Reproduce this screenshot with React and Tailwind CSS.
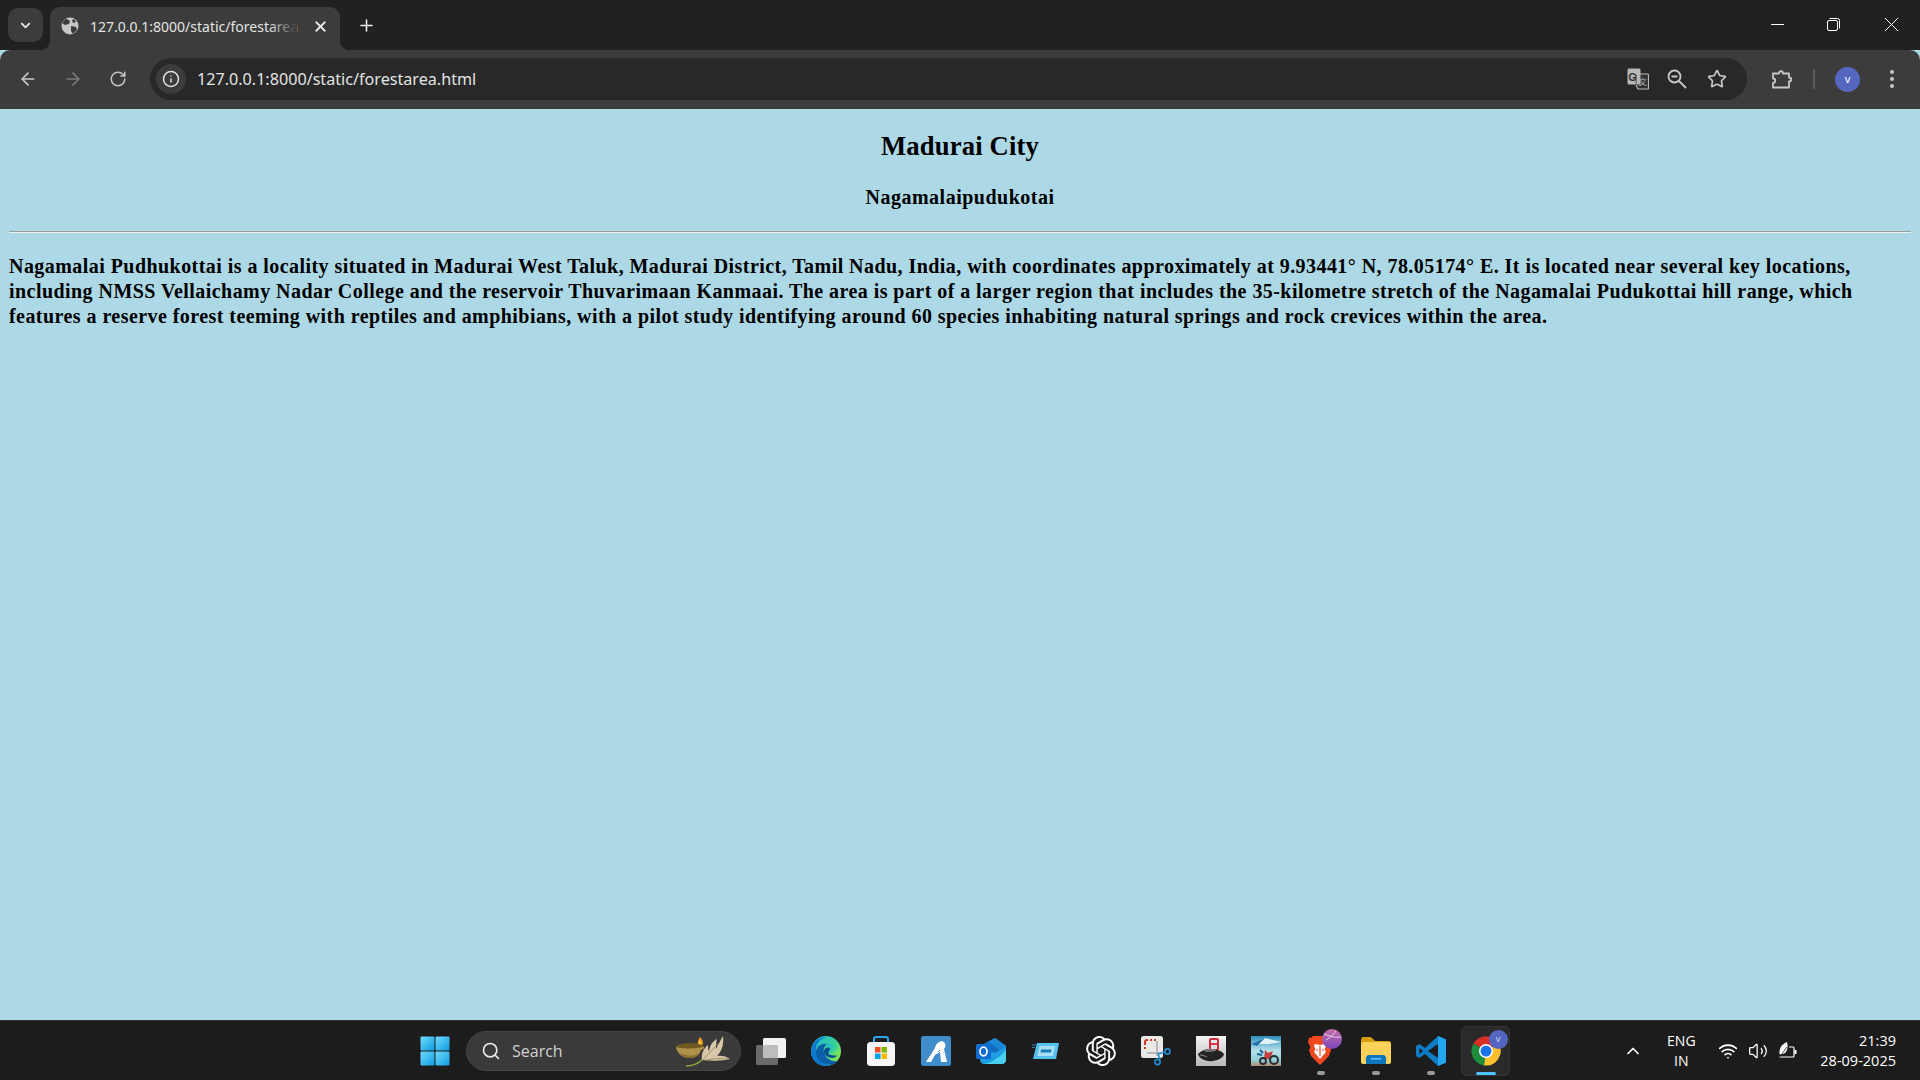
import { ArrowLeft, ArrowRight, RotateCw, Info, Star, ChevronDown, ChevronUp, X, Plus, Search, Wifi, Volume2 } from 'lucide-react';

const WinLogo = () => (
  <svg width="30" height="30" viewBox="0 0 30 30">
    <defs>
      <linearGradient id="wl" x1="0" y1="0" x2="1" y2="1">
        <stop offset="0" stopColor="#6fdcff" />
        <stop offset="1" stopColor="#0f9be0" />
      </linearGradient>
    </defs>
    <rect x="0.5" y="0.5" width="14" height="14" rx="1" fill="url(#wl)" />
    <rect x="15.5" y="0.5" width="14" height="14" rx="1" fill="url(#wl)" />
    <rect x="0.5" y="15.5" width="14" height="14" rx="1" fill="url(#wl)" />
    <rect x="15.5" y="15.5" width="14" height="14" rx="1" fill="url(#wl)" />
  </svg>
);

const Lamp = () => (
  <svg width="60" height="32" viewBox="0 0 60 32">
    <path d="M24 2c3 3 4 6 2 9h-4c-1-3 0-6 2-9z" fill="#e89a18" />
    <path d="M24 5c1 2 1 4 .5 6h-1.500c-.5-2 0-4 1-6z" fill="#f8d860" />
    <ellipse cx="14" cy="12" rx="14" ry="4" fill="#6e5a22" />
    <path d="M0 12c4 2 22 2 28-.5 0 1 0 2-.5 2.500-2 0-2 1-3 2-1 4-5 7-10.500 7C6 23 1 18 0 12z" fill="#b0924a" />
    <path d="M4 17c4 4 14 5 19 1-2 4-5 5-9 5-4 0-8-2-10-6z" fill="#8a6e2e" />
    <path d="M10 31c7 0 13-3 17-7" stroke="#8aa23a" strokeWidth="1.500" fill="none" />
    <path d="M26 25c-1-6 1-11 6-15 0 3 0 5 1 6 1-6 4-10 8-12-1 4-1 7-1 10 2-4 4-8 7-13 1 8-1 15-6 20 4-1 9 0 13 3-8 2-17 2-28 1z" fill="#d8c6a8" />
    <path d="M27 25c5-6 11-12 17-18M30 25c6-1 14-2 22-1" stroke="#937f60" strokeWidth="0.800" fill="none" />
  </svg>
);

const TaskView = () => (
  <svg width="30" height="28" viewBox="0 0 30 28">
    <rect x="7" y="1" width="23" height="20" rx="1.500" fill="#f2f2f2" />
    <rect x="0" y="8" width="22" height="20" rx="1.500" fill="#6a6a6a" />
    <rect x="7" y="8" width="15" height="13" fill="#bdbdbd" />
  </svg>
);

const Edge = () => (
  <svg width="30" height="30" viewBox="0 0 30 30">
    <defs>
      <linearGradient id="eg" x1="0.100" y1="0" x2="0.900" y2="0.700">
        <stop offset="0" stopColor="#1fb4d8" />
        <stop offset="0.600" stopColor="#37cf9a" />
        <stop offset="1" stopColor="#7ce35a" />
      </linearGradient>
    </defs>
    <circle cx="15" cy="15" r="15" fill="url(#eg)" />
    <path d="M0 15C1 6 8 1 15 1 8 3 4 9 5 16c1 8 8 14 17 12-2 1.500-5 2-7 2C7 30 0 24 0 15z" fill="#0e78cf" />
    <path d="M5 15c1-5 6-8 11-7-3 2-4 5-3 9 2 6 8 9 14 8-3 3-6 4-10 3.500C10 28 4 22 5 15z" fill="#0b5fa8" />
    <path d="M16 8c6 0 11 2 13 6 1 2 0 5-3 5-2 0-6 0-8-1-1-.500-1-2-.5-3 1-1.500 2-3 0-5-1-1-2-1.500-1.500-2z" fill="url(#eg)" />
    <path d="M13 15c.5-3 3-4 5-3.500 2 1 .5 3-.5 4.500-.5 1 0 2.500 2 3 2 .5 5 .5 7 .5-2 2-5 3-8 2-3-1-6-3-5.500-6.500z" fill="#0a4f90" />
  </svg>
);

const Store = () => (
  <svg width="30" height="30" viewBox="0 0 30 30">
    <path d="M8 7V3c0-1 .5-2 2-2h10c1.500 0 2 1 2 2v4" stroke="#2aa5e8" strokeWidth="2" fill="none" />
    <rect x="1" y="6" width="28" height="24" rx="3.500" fill="#f6f6f6" />
    <rect x="9" y="11" width="5.500" height="5.500" fill="#f25022" />
    <rect x="15.500" y="11" width="5.500" height="5.500" fill="#7fba00" />
    <rect x="9" y="17.500" width="5.500" height="5.500" fill="#00a4ef" />
    <rect x="15.500" y="17.500" width="5.500" height="5.500" fill="#ffb900" />
  </svg>
);

const AzureA = () => (
  <svg width="30" height="30" viewBox="0 0 30 30">
    <rect width="30" height="30" rx="2.500" fill="#3f8ecb" />
    <path d="M5 26 14 12c1-5 6-8 9-6 2 2 2 5 0 7l3 13h-6l-1-10-5 3-4 7z" fill="#fff" />
    <path d="M19 14l-2 2" stroke="#3f8ecb" strokeWidth="1" />
  </svg>
);

const Outlook = () => (
  <svg width="30" height="26" viewBox="0 0 30 26">
    <path d="M4 8 19 0l11 8v14c0 2-2 4-4 4H8c-2 0-4-2-4-4z" fill="#1f9de2" />
    <path d="M4 8 19 0l11 8-11 7z" fill="#1369bd" />
    <path d="M19 0l11 8-6 4-12-8z" fill="#1a86d6" />
    <path d="M7 26c9-1 17-7 23-14v10c0 2-2 4-4 4z" fill="#47d0f0" />
    <rect x="0" y="6" width="15" height="15" rx="1.500" fill="#0f6cd0" />
    <ellipse cx="7.500" cy="13.500" rx="3.500" ry="4.300" fill="none" stroke="#fff" strokeWidth="1.800" />
  </svg>
);

const SkewBox = () => (
  <svg width="27" height="18" viewBox="0 0 27 18">
    <path d="M5 1h22l-3 16H1z" fill="#55c3f0" />
    <path d="M7.500 4h15.500l-2 10H5.500z" fill="#a9e0f6" />
    <path d="M9 7.500h10.500l-.5 3H8.500z" fill="#1a7fb8" />
    <path d="M0 3h4M0 5.500h3" stroke="#2d84ad" strokeWidth="1" />
  </svg>
);

const Gpt = () => (
  <svg width="30" height="30" viewBox="0 0 320 320" fill="#fff">
    <path d="M297.060 130.970c7.260-21.790 4.760-45.660-6.850-65.480-17.460-30.400-52.560-46.040-86.840-38.680C188.120 9.630 166.110-.13 143.090 0c-35.100-.08-66.250 22.520-77.030 55.920-22.550 4.620-42.020 18.730-53.420 38.730-17.610 30.360-13.590 68.620 9.970 94.610-7.280 21.790-4.770 45.660 6.840 65.480 17.460 30.400 52.560 46.040 86.840 38.680 15.240 17.180 37.260 26.940 60.280 26.800 35.110.09 66.270-22.530 77.040-55.960 22.550-4.620 42.020-18.730 53.420-38.730 17.590-30.360 13.560-68.590-10-94.580zM176.580 299.350c-14.050.02-27.670-4.900-38.470-13.900.49-.26 1.340-.73 1.890-1.070l63.820-36.860c3.270-1.850 5.270-5.330 5.250-9.080v-89.970l26.970 15.570c.29.140.48.42.52.74v74.510c-.04 33.130-26.870 59.990-60 60.060zM47.550 244.240c-7.040-12.160-9.580-26.410-7.170-40.240.47.28 1.300.79 1.890 1.130l63.820 36.860c3.230 1.890 7.240 1.890 10.480 0l77.920-44.990v31.150c.02.32-.13.63-.38.830l-64.520 37.250c-28.730 16.550-65.420 6.710-82.040-21.990zM30.760 104.930c7-12.180 18.060-21.490 31.230-26.320 0 .55-.03 1.530-.03 2.200v73.730c-.02 3.740 1.980 7.210 5.230 9.060l77.920 44.980-26.970 15.570c-.27.18-.61.21-.91.08L52.700 186.940c-28.670-16.610-38.500-53.290-21.940-82zm221.620 51.570-77.920-44.990 26.970-15.560c.27-.18.61-.21.91-.08l64.530 37.250c28.720 16.600 38.560 53.330 21.980 82.050-7.010 12.170-18.060 21.480-31.220 26.320v-75.920c.03-3.740-1.960-7.200-5.200-9.070zM279.220 116.100c-.47-.29-1.300-.79-1.890-1.130l-63.820-36.860c-3.230-1.890-7.240-1.890-10.480 0l-77.920 44.990V91.950c-.02-.32.13-.63.38-.83l64.520-37.220c28.730-16.570 65.470-6.700 82.040 22.040 7 12.140 9.540 26.350 7.170 40.160zM110.460 171.600l-26.980-15.570c-.29-.14-.48-.42-.52-.74V80.780c.02-33.170 26.930-60.050 60.100-60.030 14.030 0 27.610 4.930 38.390 13.900-.49.260-1.330.73-1.890 1.070l-63.820 36.860c-3.270 1.850-5.270 5.320-5.250 9.070l-.03 89.950zm14.650-31.580 34.710-20.050 34.710 20.040v40.080l-34.710 20.040-34.710-20.040z" />
  </svg>
);

const Snip = () => (
  <svg width="30" height="30" viewBox="0 0 30 30">
    <rect x="0" y="0" width="22" height="22" rx="2.500" fill="#ebe8e8" />
    <path d="M4 9V6a2 2 0 0 1 2-2h1" stroke="#d13c20" strokeWidth="2" fill="none" />
    <path d="M9 4h2M13 4h2M4 11v2M4 15h0" stroke="#d13c20" strokeWidth="2" />
    <path d="M6 17h14M16 5v15" stroke="#a8a8a8" strokeWidth="1.500" />
    <path d="M17 17l2 7M17 18l7-2" stroke="#1f8ed6" strokeWidth="1.500" />
    <circle cx="16.500" cy="26" r="2.600" fill="none" stroke="#1f8ed6" strokeWidth="1.600" />
    <circle cx="26.500" cy="15.500" r="2.600" fill="none" stroke="#1f8ed6" strokeWidth="1.600" />
  </svg>
);

const CarGame = () => (
  <svg width="30" height="30" viewBox="0 0 30 30">
    <defs>
      <linearGradient id="cg" x1="0" y1="0" x2="0" y2="1">
        <stop offset="0" stopColor="#f4f4f4" />
        <stop offset="1" stopColor="#b8b8b8" />
      </linearGradient>
    </defs>
    <rect width="30" height="30" fill="url(#cg)" />
    <rect x="14" y="3" width="8" height="11" rx="1" fill="none" stroke="#d22a3c" strokeWidth="2" />
    <path d="M14 8h8" stroke="#d22a3c" strokeWidth="1.800" />
    <path d="M2 18c3-3 7-5 13-5 5 0 11 2 13 5 0 3-5 6-11 7-6 1-14-2-15-7z" fill="#232323" />
    <path d="M9 15c3-2 7-2 11-1-3 1-6 2-11 1zM4 19c3 0 5 1 7 2" stroke="#8a8a8a" strokeWidth="1" fill="#5c5c5c" />
  </svg>
);

const BikeGame = () => (
  <svg width="30" height="30" viewBox="0 0 30 30">
    <defs>
      <linearGradient id="bg" x1="0" y1="0" x2="0" y2="1">
        <stop offset="0" stopColor="#2e8ec0" />
        <stop offset="0.500" stopColor="#b9e2ea" />
        <stop offset="0.800" stopColor="#8fd0d8" />
        <stop offset="1" stopColor="#b08a70" />
      </linearGradient>
    </defs>
    <rect width="30" height="30" fill="url(#bg)" />
    <path d="M0 8 14 2l16 4-12 2z" fill="#e2f2f6" />
    <path d="M0 8 14 2 6 10z" fill="#2270a8" />
    <path d="M14 14l3 3 5-2-3 8h-6z" fill="#c9403a" />
    <path d="M9 14l3 3M6 18l5 1" stroke="#1f5f98" strokeWidth="2" />
    <circle cx="23" cy="24" r="4" fill="none" stroke="#2c2c30" strokeWidth="2" />
    <circle cx="12" cy="25" r="3" fill="none" stroke="#2c2c30" strokeWidth="1.800" />
  </svg>
);

const Brave = () => (
  <div className="relative w-[34px] h-[36px] ml-[8px] mb-[7px]">
    <svg className="absolute left-0 bottom-0" width="24" height="30" viewBox="0 0 24 30">
      <path d="M5 1h14l2 2 2-.5 1 5-1.500 4L23 15 21 21 12 30 3 21 1 15l1.500-3L0 7.500l1-5 2 .5z" fill="#f0491f" />
      <path d="M7 9l5 1 5-1 1 2-1.500 3 1.500 3-6 7-6-7 1.500-3L6 11z" fill="#fff" />
      <path d="M12 11v10M8 15h2M14 15h2" stroke="#f0491f" strokeWidth="1.200" />
    </svg>
    <svg className="absolute right-0 top-0" width="20" height="20" viewBox="0 0 20 20">
      <defs>
        <linearGradient id="bb" x1="0.500" y1="0" x2="0.500" y2="1">
          <stop offset="0" stopColor="#c56fa8" />
          <stop offset="1" stopColor="#7d46b8" />
        </linearGradient>
      </defs>
      <circle cx="10" cy="10" r="10" fill="url(#bb)" />
      <path d="M2 5c5 2 11 4 17 3M14 2C12 5 8 9 4 11" stroke="#ecd0e6" strokeWidth="1" fill="none" />
    </svg>
  </div>
);

const Folder = () => (
  <svg width="30" height="27" viewBox="0 0 30 27">
    <path d="M0 3c0-1.500 1-3 2.500-3H9c1 0 2 1 3 2l2 2h14c1 0 2 1 2 2v4H0z" fill="#d79f0f" />
    <path d="M0 7c0-1 1-2 2-2h26c1 0 2 1 2 2v18c0 1-1 2-2 2H2c-1 0-2-1-2-2z" fill="#fcd25a" />
    <path d="M5 27v-6c0-1.500 1-3 3-3h14c2 0 3 1.500 3 3v6z" fill="#0f75bd" />
    <rect x="10" y="21" width="10" height="1.500" fill="#6fbdf0" />
  </svg>
);

const VsCode = () => (
  <svg width="30" height="30" viewBox="0 0 30 30">
    <path d="M22 0 30 3.500v23L22 30 9 18l-5.500 4L0 20v-10l3.500-2L9 12z" fill="#0e7cc4" />
    <path d="M22 0 30 3.500v23L22 30z" fill="#23a6f0" />
    <path d="M22 8 12 15l10 7z" fill="#1c1c1c" />
    <path d="M3.500 12v6L7 15z" fill="#1c1c1c" />
  </svg>
);

const Chrome = () => (
  <svg width="30" height="30" viewBox="0 0 30 30">
    <path d="M15 15 2.500 7.500A14.500 14.500 0 0 1 27.500 7.500z" fill="#d93025" />
    <path d="M15 15 2.500 7.500A14.500 14.500 0 0 0 13 29.400z" fill="#1e8e3e" />
    <path d="M15 15 27.500 7.500A14.500 14.500 0 0 1 13 29.400z" fill="#fbc02d" />
    <circle cx="15" cy="15" r="7" fill="#fff" />
    <circle cx="15" cy="15" r="5.500" fill="#1a73e8" />
  </svg>
);

const TranslateIcon = () => (
  <svg width="22" height="22" viewBox="0 0 22 22">
    <rect x="0.500" y="0.500" width="13" height="16" rx="1.500" fill="#b8b8b8" />
    <path d="M8 6h12.500a1 1 0 0 1 1 1v13a1 1 0 0 1-1 1H11l-2-4" fill="#303030" stroke="#b8b8b8" strokeWidth="1.200" />
    <path d="M9.500 5.500h4v11h-4z" fill="#b8b8b8" />
    <text x="1.500" y="12.500" fontSize="10" fontWeight="700" fontFamily="Liberation Sans" fill="#303030">G</text>
    <text x="11.500" y="17" fontSize="8.500" fontFamily="Noto Sans CJK SC" fill="#b8b8b8">文</text>
  </svg>
);

const ZoomGlass = () => (
  <svg width="20" height="20" viewBox="0 0 20 20" fill="none" stroke="#c7c7c7" strokeWidth="1.800">
    <circle cx="7.500" cy="7.500" r="6" />
    <path d="M4.500 7.500h6M12 12l7 7" />
  </svg>
);

const ExtensionIcon = () => (
  <svg width="22" height="22" viewBox="0 0 22 22" fill="none" stroke="#c7c7c7" strokeWidth="1.800" strokeLinejoin="round">
    <path d="M2 5.500h6C8 2.500 12 2.500 12 5.500h6V9.500C21 9.500 21 13.500 18 13.500V19.500H2V15C5 15 5 10.500 2 10.500Z" />
  </svg>
);

const MenuDots = () => (
  <svg width="6" height="20" viewBox="0 0 6 20" fill="#c7c7c7">
    <circle cx="3" cy="3" r="2" />
    <circle cx="3" cy="10" r="2" />
    <circle cx="3" cy="17" r="2" />
  </svg>
);

const BatteryLeaf = () => (
  <svg width="20" height="20" viewBox="0 0 20 20" fill="none">
    <path d="M1 16h14a1 1 0 0 0 1-1V7a1 1 0 0 0-1-1h-4" stroke="#fff" strokeWidth="1.200" />
    <path d="M16.500 9h2v4h-2z" fill="#fff" />
    <path d="M1.500 13C1 7 4 3 9 1c1 4 1 8-2 11-2 1-4 2-5.500 1z" fill="#fff" />
    <path d="M1 17l8-11" stroke="#1c1c1c" strokeWidth="0.800" />
  </svg>
);

const TaskItem = ({ children, dot, active }) => (
  <div className="relative w-[55px] h-[50px] flex items-center justify-center">
    {active && <span className="absolute inset-y-0 inset-x-[3px] rounded-[5px] bg-[#2a2a2a] border border-[#333]" />}
    <span className="relative flex items-center justify-center">{children}</span>
    {dot && <span className="absolute bottom-[1px] w-[8px] h-[4px] rounded-full bg-[#9a9a9a]" />}
    {active && <span className="absolute bottom-[1px] w-[20px] h-[3px] rounded-full bg-[#4cc2ff]" />}
  </div>
);

const App = () => {
  return (
    <div className="flex flex-col w-full h-screen overflow-hidden bg-[#add8e6]">

      {/* Tab strip */}
      <div className="h-[50px] shrink-0 bg-[#202221] flex items-end text-white">
        <div className="self-start mt-[8px] ml-[8px] w-[35px] h-[34px] rounded-[10px] bg-[#3c3c3c] flex items-center justify-center">
          <ChevronDown size={15} strokeWidth={3} color="#e4e4e4" />
        </div>
        <div className="relative ml-[7px] w-[290px] h-[43px] rounded-t-[10px] bg-[#3c3c3c] flex items-center pl-[11px] pb-[5px] font-['Noto_Sans',sans-serif] text-[#e3e3e3]">
          <span className="absolute left-[-10px] bottom-0 w-[10px] h-[10px] bg-[radial-gradient(circle_at_0_0,#202221_10px,#3c3c3c_10.5px)]" />
          <span className="absolute right-[-10px] bottom-0 w-[10px] h-[10px] bg-[radial-gradient(circle_at_100%_0,#202221_10px,#3c3c3c_10.5px)]" />
          <svg width="18" height="18" viewBox="0 0 18 18">
            <circle cx="9" cy="9" r="8.500" fill="#c4c7c5" />
            <path d="M5 1.500 9 4 8 7 4 8 1 6zM10 9l5 1 1 3-4 4-2-3zM13 2l2 3-3 1-1-3z" fill="#3c3c3c" />
          </svg>
          <span className="relative ml-[11px] w-[207px] whitespace-nowrap text-[14px]">
            127.0.0.1:8000/static/forestarea
            <span className="absolute right-0 top-0 w-[28px] h-full bg-gradient-to-r from-transparent to-[#3c3c3c]" />
          </span>
          <X size={17} strokeWidth={2.500} className="ml-[15px]" color="#e8e8e8" />
        </div>
        <Plus size={19} strokeWidth={2} className="self-start mt-[16px] ml-[17px]" color="#ebebeb" />
        <div className="flex-1" />
        <div className="self-start flex items-center h-[48px] pr-[22px]">
          <svg width="13" height="13" viewBox="0 0 13 13" stroke="#fff" strokeWidth="1" fill="none">
            <path d="M0 6.500h13" />
          </svg>
          <svg width="13" height="13" viewBox="0 0 13 13" fill="none" stroke="#fff" strokeWidth="1" className="ml-[43px]">
            <rect x="0.500" y="2.500" width="10" height="10" rx="1.500" />
            <path d="M2.500 .500h8a2 2 0 0 1 2 2v8" />
          </svg>
          <svg width="13" height="13" viewBox="0 0 13 13" stroke="#fff" strokeWidth="1" fill="none" className="ml-[45px]">
            <path d="M0 0l13 13M13 0 0 13" />
          </svg>
        </div>
      </div>

      {/* Toolbar */}
      <div className="h-[59px] shrink-0 bg-[#3c3c3c] flex items-center pb-[1px] text-[#c7c7c7] rounded-t-[10px]">
        <ArrowLeft size={20} strokeWidth={2} className="ml-[18px]" color="#c7c7c7" />
        <ArrowRight size={20} strokeWidth={2} className="ml-[25px]" color="#787878" />
        <RotateCw size={18} strokeWidth={2} className="ml-[26px]" color="#c7c7c7" />
        <div className="ml-[23px] w-[1597px] h-[42px] rounded-full bg-[#282828] flex items-center pl-[6px]">
          <div className="w-[30px] h-[30px] rounded-full bg-[#3c3c3c] flex items-center justify-center">
            <Info size={18} strokeWidth={2} color="#e3e3e3" />
          </div>
          <span className="ml-[11px] mt-[1px] flex-1 text-[16.150px] text-[#e3e3e3] font-['Noto_Sans',sans-serif]">127.0.0.1:8000/static/forestarea.html</span>
          <TranslateIcon />
          <span className="ml-[18px]"><ZoomGlass /></span>
          <Star size={20} strokeWidth={2} className="ml-[20px] mr-[20px]" color="#c7c7c7" />
        </div>
        <span className="ml-[24px]"><ExtensionIcon /></span>
        <div className="ml-[20px] w-[2px] h-[20px] bg-[#5a5a5a]" />
        <div className="ml-[20px] w-[25px] h-[25px] rounded-full bg-[#5566c0] flex items-center justify-center text-[11px] text-white font-['Noto_Sans',sans-serif]">v</div>
        <span className="ml-[29px]"><MenuDots /></span>
      </div>

      {/* Page */}
      <main className="flex-1 min-h-0 px-[9px] font-['Liberation_Serif',serif] text-black">
        <h1 className="mt-[21px] text-center text-[26.670px] leading-[33px] tracking-[0.15px] font-bold">Madurai City</h1>
        <h2 className="mt-[22px] text-center text-[20px] leading-[25px] tracking-[0.5px] font-bold">Nagamalaipudukotai</h2>
        <hr className="mt-[21px] h-[2px] border-0 bg-gradient-to-b from-[#9c9c9c] from-50% to-[#eeeeee] to-50%" />
        <p className="mt-[21px] text-[20px] leading-[25px] tracking-[0.445px] font-bold">
          Nagamalai Pudhukottai is a locality situated in Madurai West Taluk, Madurai District, Tamil Nadu, India, with coordinates approximately at 9.93441° N, 78.05174° E. It is located near several key locations, including NMSS Vellaichamy Nadar College and the reservoir Thuvarimaan Kanmaai. The area is part of a larger region that includes the 35-kilometre stretch of the Nagamalai Pudukottai hill range, which features a reserve forest teeming with reptiles and amphibians, with a pilot study identifying around 60 species inhabiting natural springs and rock crevices within the area.
        </p>
      </main>

      {/* Taskbar */}
      <div className="h-[60px] shrink-0 bg-[#1c1c1c] border-t border-[#2e2e2e] grid grid-cols-[1fr_auto_1fr] items-center text-white font-['Open_Sans',sans-serif]">
        <div />
        <div className="flex items-center">
          <TaskItem><WinLogo /></TaskItem>
          <div className="ml-[4px] w-[275px] h-[40px] rounded-full bg-[#3a3a3a] border border-[#454545] flex items-center pl-[14px] pr-[4px] mr-[2px]">
            <Search size={20} strokeWidth={2} color="#e8e8e8" />
            <span className="ml-[11px] flex-1 text-[16px] text-[#d0d0d0]">Search</span>
            <Lamp />
          </div>
          <TaskItem><TaskView /></TaskItem>
          <TaskItem><Edge /></TaskItem>
          <TaskItem><Store /></TaskItem>
          <TaskItem><AzureA /></TaskItem>
          <TaskItem><Outlook /></TaskItem>
          <TaskItem><SkewBox /></TaskItem>
          <TaskItem><Gpt /></TaskItem>
          <TaskItem><Snip /></TaskItem>
          <TaskItem><CarGame /></TaskItem>
          <TaskItem><BikeGame /></TaskItem>
          <TaskItem dot><Brave /></TaskItem>
          <TaskItem dot><Folder /></TaskItem>
          <TaskItem dot><VsCode /></TaskItem>
          <TaskItem active>
            <Chrome />
            <span className="absolute top-[-6px] right-[-7px] w-[19px] h-[19px] rounded-full bg-[#5566c0] flex items-center justify-center text-[9px] text-[#cfd4ff] font-['Noto_Sans',sans-serif]">v</span>
          </TaskItem>
        </div>
        <div className="flex items-center justify-end pr-[24px]">
          <ChevronUp size={20} strokeWidth={2} color="#fff" />
          <div className="ml-[13px] w-[50px] text-center text-[14px] leading-[20px]">ENG<br />IN</div>
          <Wifi size={20} strokeWidth={2} className="ml-[12px]" color="#fff" />
          <Volume2 size={20} strokeWidth={1.500} className="ml-[10px]" color="#fff" />
          <span className="ml-[10px]"><BatteryLeaf /></span>
          <div className="ml-[22px] text-right text-[14.500px] leading-[20px]">21:39<br />28-09-2025</div>
        </div>
      </div>
    </div>
  );
};

export default App;
